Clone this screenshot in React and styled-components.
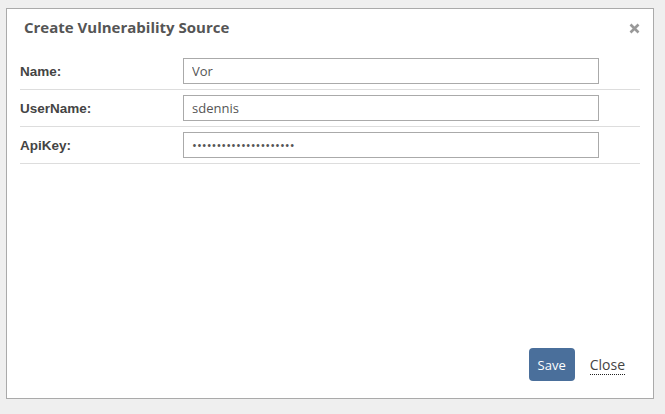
import React from 'react';
import styled, { createGlobalStyle } from 'styled-components';

const GlobalStyle = createGlobalStyle`
  html, body {
    margin: 0;
    padding: 0;
    background: #efefef;
  }
  body {
    font-family: "Liberation Sans", Arial, sans-serif;
  }
`;

const Page = styled.div`
  width: 665px;
  height: 414px;
  padding: 8px 0 0 6px;
  box-sizing: border-box;
`;

const Dialog = styled.div`
  width: 648px;
  height: 391px;
  box-sizing: border-box;
  background: #fff;
  border: 1px solid #aaaaaa;
  display: flex;
  flex-direction: column;
`;

const Header = styled.div`
  display: flex;
  align-items: center;
  justify-content: space-between;
  padding: 5px 12px 0 17px;
  height: 30px;
  box-sizing: border-box;
`;

const Title = styled.h2`
  margin: 0;
  font-family: "Open Sans", sans-serif;
  font-size: 15px;
  font-weight: 700;
  color: #555;
`;

const CloseIcon = styled.button`
  background: none;
  border: none;
  padding: 0;
  margin-top: 4px;
  width: 12px;
  height: 12px;
  display: flex;
  cursor: pointer;
`;

const Form = styled.div`
  padding: 14px 13px 0 13px;
`;

const Row = styled.div`
  display: grid;
  grid-template-columns: 163px 416px;
  align-items: center;
  padding: 5px 0 5px 0;
  border-bottom: 1px solid #dddddd;
`;

const Label = styled.label`
  font-size: 13.5px;
  font-weight: 700;
  color: #444;
`;

const Input = styled.input`
  height: 26px;
  box-sizing: border-box;
  border: 1px solid #aaaaaa;
  padding: 0 8px;
  font-family: "Open Sans", sans-serif;
  font-size: 13px;
  color: #555;
  outline: none;
`;

const Footer = styled.div`
  margin-top: auto;
  display: flex;
  align-items: center;
  justify-content: flex-end;
  gap: 15px;
  padding: 0 28px 17px 0;
`;

const SaveButton = styled.button`
  width: 46px;
  height: 33px;
  border: none;
  border-radius: 4px;
  background: #4a6f9b;
  color: #fff;
  font-family: "Open Sans", sans-serif;
  font-size: 13px;
  padding: 0;
  cursor: pointer;
`;

const CloseLink = styled.a`
  font-family: "Open Sans", sans-serif;
  font-size: 14px;
  color: #444;
  text-decoration: none;
  border-bottom: 1px dotted #222;
  padding-bottom: 0;
  cursor: pointer;
`;

const fields = [
  { label: 'Name:', value: 'Vor', type: 'text' },
  { label: 'UserName:', value: 'sdennis', type: 'text' },
  { label: 'ApiKey:', value: 'xxxxxxxxxxxxxxxxxxxxx', type: 'password' },
];

export default function App() {
  return (
    <Page>
      <GlobalStyle />
      <Dialog>
        <Header>
          <Title>Create Vulnerability Source</Title>
          <CloseIcon aria-label="Close">
            <svg width="11" height="11" viewBox="0 0 11 11">
              <path d="M1.5 1.5 L9.5 9.5 M9.5 1.5 L1.5 9.5" stroke="#999" strokeWidth="2.6" strokeLinecap="butt" />
            </svg>
          </CloseIcon>
        </Header>
        <Form>
          {fields.map(f => (
            <Row key={f.label}>
              <Label>{f.label}</Label>
              <Input type={f.type} defaultValue={f.value} />
            </Row>
          ))}
        </Form>
        <Footer>
          <SaveButton>Save</SaveButton>
          <CloseLink>Close</CloseLink>
        </Footer>
      </Dialog>
    </Page>
  );
}
